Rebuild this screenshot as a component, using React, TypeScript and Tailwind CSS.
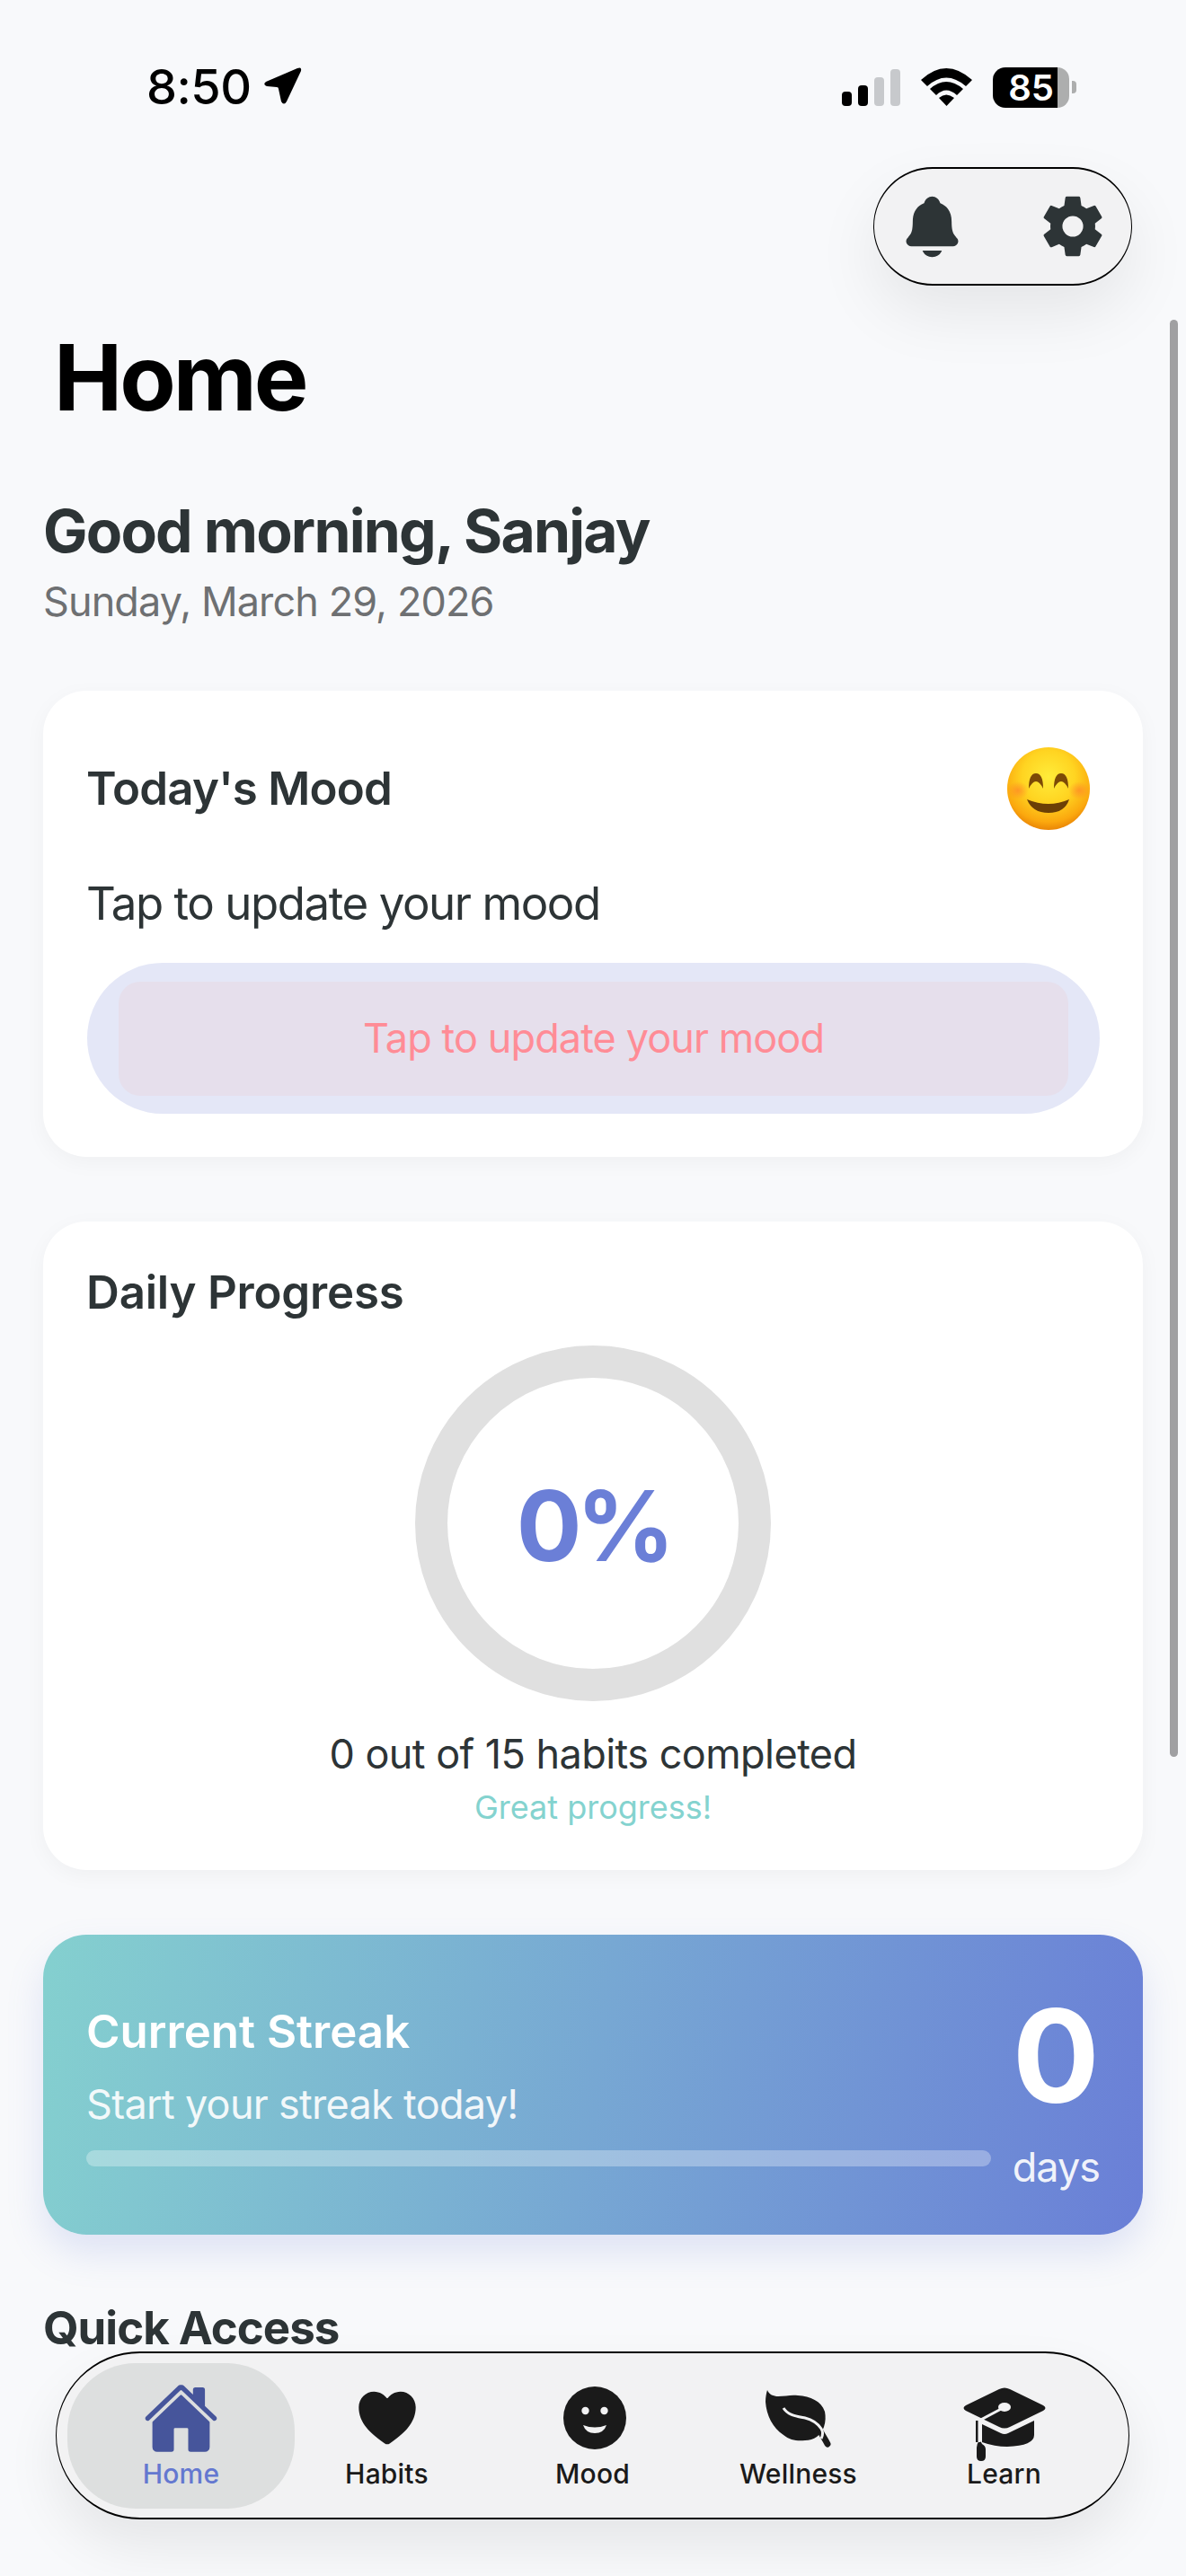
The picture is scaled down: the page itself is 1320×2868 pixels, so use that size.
import { IoHome, IoHeart, IoNotifications, IoSettingsSharp } from "react-icons/io5";
import React from "react";

const fontInter = { fontFamily: "Inter, 'Noto Sans', sans-serif" };

function StatusBar() {
  return (
    <div className="flex h-[194px] items-center justify-between pr-[122px] pl-[163px]">
      <div className="flex items-center gap-[12px]">
        <span className="text-[54px] leading-none font-medium tracking-[-0.5px] text-black">8:50</span>
        <svg width="46" height="46" viewBox="0 0 46 46" className="-mt-[2px]">
          <path d="M39 3 Q44 1 43 6 L27 40 Q24 45 21 40 L18 26 Q18 24 16 24 L5 23 Q0 21 4 18 Z" fill="#000" />
        </svg>
      </div>
      <div className="flex items-center">
        {/* signal */}
        <div className="flex items-end gap-[7px]">
          <div className="h-[16px] w-[11px] rounded-[4px] bg-black" />
          <div className="h-[23px] w-[11px] rounded-[4px] bg-black" />
          <div className="h-[32px] w-[11px] rounded-[4px] bg-[#c7c9cc]" />
          <div className="h-[41px] w-[11px] rounded-[4px] bg-[#c7c9cc]" />
        </div>
        <svg className="ml-[23px]" width="57" height="42" viewBox="0 0 57 42">
          <path d="M0 13 Q28 -13 57 13 L50 20 Q28 1 7 20 Z" fill="#000" />
          <path d="M10 23 Q28 7 47 23 L40 30 Q28 19 17 30 Z" fill="#000" />
          <path d="M20 33 Q28 26 37 33 L28.500 42 Z" fill="#000" />
        </svg>
        <div className="ml-[23px] flex h-[45px] w-[85px]">
          <div className="flex w-[72px] items-center justify-end rounded-l-[14px] bg-black pr-[4px] text-[40px] leading-[45px] font-semibold text-white">
            85
          </div>
          <div className="w-[13px] rounded-r-[14px] bg-[#adaeae]" />
        </div>
        <div className="ml-[3px] h-[14px] w-[5px] rounded-r-[4px] bg-[#adaeae]" />
      </div>
    </div>
  );
}

function MoodEmoji() {
  return (
    <svg width="96" height="96" viewBox="0 0 96 96">
      <defs>
        <radialGradient id="face" cx="50%" cy="36%" r="64%">
          <stop offset="0%" stopColor="#ffec3a" />
          <stop offset="50%" stopColor="#ffd421" />
          <stop offset="85%" stopColor="#fba80e" />
          <stop offset="100%" stopColor="#ea8606" />
        </radialGradient>
        <radialGradient id="blush" cx="50%" cy="50%" r="50%">
          <stop offset="0%" stopColor="#ff7f2a" stopOpacity="0.65" />
          <stop offset="100%" stopColor="#ff7f2a" stopOpacity="0" />
        </radialGradient>
      </defs>
      <circle cx="48" cy="48" r="46" fill="url(#face)" />
      <ellipse cx="14" cy="50" rx="12" ry="10" fill="url(#blush)" />
      <ellipse cx="82" cy="50" rx="12" ry="10" fill="url(#blush)" />
      <path d="M26 48 Q26 31 34 31 Q42 31 42 48 Q38 40 34 40 Q30 40 26 48 Z" fill="#7c4a06" />
      <path d="M54 48 Q54 31 62 31 Q70 31 70 48 Q66 40 62 40 Q58 40 54 48 Z" fill="#7c4a06" />
      <path d="M24 60 Q48 70 71 60 Q66 75 48 75 Q30 75 24 60 Z" fill="#6b3f06" />
    </svg>
  );
}

function FaceIcon() {
  return (
    <svg width="72" height="72" viewBox="0 0 72 72" className="ml-[4px]">
      <circle cx="36" cy="36" r="35" fill="#1a1a1a" />
      <circle cx="25.500" cy="28" r="4.200" fill="#f2f2f3" />
      <circle cx="46.500" cy="28" r="4.200" fill="#f2f2f3" />
      <path d="M23 44 Q36 49 49 44 Q46 53 36 53 Q26 53 23 44 Z" fill="#f2f2f3" />
    </svg>
  );
}

function LeafIcon() {
  return (
    <svg width="74" height="66" viewBox="0 0 74 66">
      <path
        d="M2 2 C4 7 9 9 14 9 C22 9 28 7 36 8 C50 9 62 14 66 26 C67 31 67 37 65 43 C62 52 54 58 44 58 C36 59 27 58 20 52 C8 44 1 30 0 15 C0 10 1 5 2 2 Z"
        fill="#1a1a1a"
      />
      <path d="M60 46 C63 52 66 56 69 62" stroke="#1a1a1a" strokeWidth="7" strokeLinecap="round" fill="none" />
      <path d="M20 22 C25 30 34 31 44 33 C52 35 58 39 62 45 C64 48 64 52 62 56" stroke="#f2f2f3" strokeWidth="3" fill="none" />
    </svg>
  );
}

function CapIcon() {
  return (
    <svg width="94" height="84" viewBox="0 0 94 84" className="mt-[14px]">
      <path d="M41 3 Q47 0 53 3 L90 21 Q95 24 90 27 L53 45 Q47 48 41 45 L4 27 Q-1 24 4 21 Z" fill="#1a1a1a" />
      <path d="M22 42 L43 52 Q47 54 51 52 L80 38 V54 Q80 66 50 67 Q36 67 22 62 Z" fill="#1a1a1a" />
      <rect x="15" y="38" width="3" height="24" fill="#1a1a1a" />
      <path d="M19 60 Q21 61 22 64 Q26 66 26 70 V78 Q26 83 21 83 Q16 83 16 78 V68 Q16 64 19 60 Z" fill="#1a1a1a" />
      <path d="M47 23 L19 38 V62" stroke="#f2f2f3" strokeWidth="3" fill="none" />
      <ellipse cx="47" cy="23" rx="7" ry="5" fill="#f2f2f3" />
    </svg>
  );
}

const navItems = [
  { label: "Home", icon: <IoHome size={85} color="#46559b" />, active: true },
  { label: "Habits", icon: <IoHeart size={78} color="#1a1a1a" />, active: false },
  { label: "Mood", icon: <FaceIcon />, active: false },
  { label: "Wellness", icon: <LeafIcon />, active: false },
  { label: "Learn", icon: <CapIcon />, active: false },
];

function BottomNav() {
  return (
    <div className="absolute top-[2618px] left-[62px] flex h-[187px] w-[1195px] items-center rounded-[94px] border-x border-y-2 border-black bg-[#f2f2f3] px-[24px] shadow-[0_30px_60px_rgba(0,0,0,0.08)]">
      {navItems.map(({ label, icon, active }) => (
        <div key={label} className="flex w-[229px] shrink-0 flex-col items-center">
          <div
            className={`flex h-[162px] w-[253px] shrink-0 flex-col items-center rounded-[76px] pt-[19px] ${
              active ? "bg-[#dddfdf]" : ""
            }`}
          >
            <div className="flex h-[85px] items-center justify-center">{icon}</div>
            <span
              className={`mt-[1px] text-[30px] leading-[36px] font-medium tracking-[0.2px] ${
                active ? "text-[#6478d0]" : "text-[#1a1a1a]"
              }`}
            >
              {label}
            </span>
          </div>
        </div>
      ))}
    </div>
  );
}

export default function App() {
  return (
    <div className="relative h-[2868px] w-[1320px] overflow-hidden bg-[#f8f9fb]" style={fontInter}>
      <StatusBar />

      {/* floating toolbar */}
      <div className="absolute top-[186px] left-[972px] flex h-[132px] w-[288px] items-center justify-between rounded-[66px] border-x border-y-2 border-black bg-[#f2f2f3] pr-[28px] pl-[26px] shadow-[0_30px_70px_rgba(0,0,0,0.08)]">
        <IoNotifications size={77} color="#2d3436" />
        <IoSettingsSharp size={74} color="#2d3436" />
      </div>

      {/* scroll indicator */}
      <div className="absolute top-[356px] left-[1302px] h-[1600px] w-[9px] rounded-full bg-[#a0a0a2]" />

      <main className="px-12">
        <h1 className="mt-[165px] pl-3 text-[102px] leading-[123px] font-bold tracking-[-3px] text-black">Home</h1>

        <h2 className="mt-[69px] text-[66px] leading-[80px] font-bold tracking-[-1.8px] text-[#2d3436]">
          Good morning, Sanjay
        </h2>
        <p className="mt-[12px] text-[45px] leading-[54px] tracking-[-0.9px] text-[#6e7072]">Sunday, March 29, 2026</p>

        <section className="mt-[72px] h-[519px] rounded-[48px] bg-white px-12 pt-[61px] shadow-[0_6px_24px_rgba(0,0,0,0.04)]">
          <div className="flex h-[96px] items-center justify-between">
            <h3 className="text-[51px] leading-[62px] font-semibold tracking-[-0.75px] text-[#2d3436]">Today's Mood</h3>
            <div className="mr-[9px]">
              <MoodEmoji />
            </div>
          </div>
          <p className="mt-[49px] text-[51px] leading-[62px] tracking-[-1.45px] text-[#2d3436]">
            Tap to update your mood
          </p>
          <div className="mt-[35px] ml-[1px] flex h-[168px] items-center rounded-[84px] bg-[#e4e7f7] px-[35px]">
            <div className="flex h-[127px] w-full items-center justify-center rounded-[24px] bg-[#e6dfec] text-[45px] tracking-[-0.9px] text-[#ff8c96]">
              Tap to update your mood
            </div>
          </div>
        </section>

        <section className="mt-[72px] flex h-[722px] flex-col items-center rounded-[48px] bg-white px-12 pt-[48px] shadow-[0_6px_24px_rgba(0,0,0,0.04)]">
          <h3 className="w-full text-[51px] leading-[62px] font-semibold tracking-[-0.2px] text-[#2d3436]">
            Daily Progress
          </h3>
          <div className="mt-[28px] flex h-[396px] w-[396px] items-center justify-center rounded-full border-[36px] border-[#e0e0e0] pt-[5px] text-[108px] font-bold tracking-[-6px] text-[#6b7fd7]">
            0%
          </div>
          <p className="mt-[30px] text-[45px] leading-[58px] tracking-[-0.55px] text-[#2d3436]">
            0 out of 15 habits completed
          </p>
          <p className="mt-[8px] text-[36px] leading-[44px] text-[#84d3cf]">Great progress!</p>
        </section>

        <section className="mt-[72px] flex h-[334px] items-start justify-between rounded-[48px] bg-linear-[100deg,#84d0cf,#6a7fd7] px-12 text-white shadow-[0_20px_40px_rgba(106,127,215,0.18)]">
          <div className="w-[1007px] pt-[77px]">
            <h3 className="text-[51px] leading-[62px] font-semibold">Current Streak</h3>
            <p className="mt-[23px] text-[45px] leading-[54px] tracking-[-0.7px] opacity-90">
              Start your streak today!
            </p>
            <div className="mt-[24px] h-[18px] w-full rounded-[9px] bg-white/30" />
          </div>
          <div className="flex flex-col items-center pt-[63px]">
            <span className="text-[144px] leading-[144px] font-bold">0</span>
            <span className="mt-[25px] text-[45px] leading-[54px] tracking-[-1px] opacity-90">days</span>
          </div>
        </section>

        <h2 className="mt-[73px] text-[51px] leading-[62px] font-bold tracking-[-1px] text-[#2d3436]">Quick Access</h2>
      </main>

      <BottomNav />
    </div>
  );
}
